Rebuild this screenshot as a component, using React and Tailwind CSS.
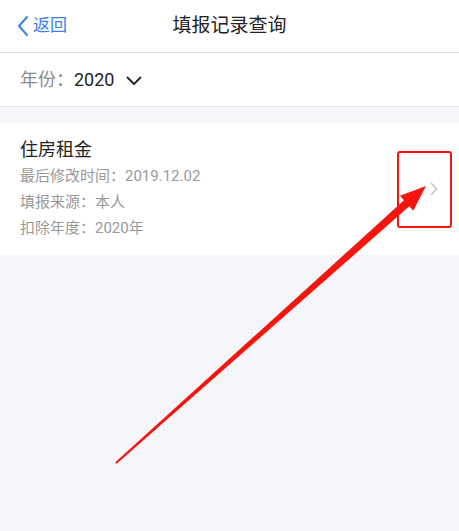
import React from "react";

const font = { fontFamily: 'Roboto, "Noto Sans CJK SC", "Noto Sans", sans-serif' };

export default function App() {
  // arrow geometry
  const tail = [116, 463];
  const tip = [426, 186];
  const dx = tip[0] - tail[0];
  const dy = tip[1] - tail[1];
  const len = Math.hypot(dx, dy);
  const ux = dx / len, uy = dy / len;
  const nx = -uy, ny = ux;
  const headLen = 26;
  const base = [tip[0] - ux * headLen, tip[1] - uy * headLen];
  const p = (pt, w) => [pt[0] + nx * w, pt[1] + ny * w];
  const pts = [
    p(tail, 1),
    p(base, 4),
    p(base, 10),
    tip,
    p(base, -10),
    p(base, -4),
    p(tail, -1),
  ]
    .map((q) => q.join(","))
    .join(" ");

  return (
    <div className="relative w-[459px] h-[531px] bg-[#f5f6fa] overflow-hidden" style={font}>
      {/* nav bar */}
      <div className="relative flex items-center h-[53px] bg-white border-b border-[#e0e0e0]">
        <div className="flex items-center pl-[17px] text-[#3a7ef0] text-[17px]">
          <svg width="12" height="22" viewBox="0 0 12 22" className="mr-[4px]">
            <path d="M10 2 L2 11 L10 20" fill="none" stroke="#3a7ef0" strokeWidth="2" strokeLinecap="round" strokeLinejoin="round" />
          </svg>
          <span>返回</span>
        </div>
        <div className="absolute left-0 right-0 text-center text-[19px] text-[#222] pointer-events-none">填报记录查询</div>
      </div>

      {/* year row */}
      <div className="flex items-center h-[54px] bg-white border-b border-[#e6e6e6] pl-[20px]">
        <span className="text-[18px] text-[#8a8a8a]">年份：</span>
        <span className="text-[18px] text-[#222]">2020</span>
        <svg width="16" height="10" viewBox="0 0 16 10" className="ml-[12px] mt-[2px]">
          <path d="M1.5 1.5 L8 8 L14.5 1.5" fill="none" stroke="#222" strokeWidth="1.8" strokeLinecap="round" strokeLinejoin="round" />
        </svg>
      </div>

      {/* card */}
      <div className="mt-[16px] bg-white h-[132px] flex items-center pl-[20px] pr-[20px]">
        <div className="flex-1 flex flex-col">
          <div className="text-[18px] text-[#222] leading-[26px]">住房租金</div>
          <div className="text-[15px] text-[#999] leading-[26px]">最后修改时间：2019.12.02</div>
          <div className="text-[15px] text-[#999] leading-[26px]">填报来源：本人</div>
          <div className="text-[15px] text-[#999] leading-[26px]">扣除年度：2020年</div>
        </div>
        <svg width="8" height="14" viewBox="0 0 8 14" className="mr-[1px]">
          <path d="M1.5 1.5 L6.5 7 L1.5 12.5" fill="none" stroke="#c8c8cc" strokeWidth="1.8" strokeLinecap="round" strokeLinejoin="round" />
        </svg>
      </div>

      {/* annotation overlay */}
      <div className="absolute left-[397px] top-[151px] w-[55px] h-[77px] border-[2px] border-[#f3160f] rounded-[3px]"></div>
      <svg className="absolute left-0 top-0" width="459" height="531" viewBox="0 0 459 531">
        <polygon points={pts} fill="#f3160f" />
      </svg>
    </div>
  );
}
